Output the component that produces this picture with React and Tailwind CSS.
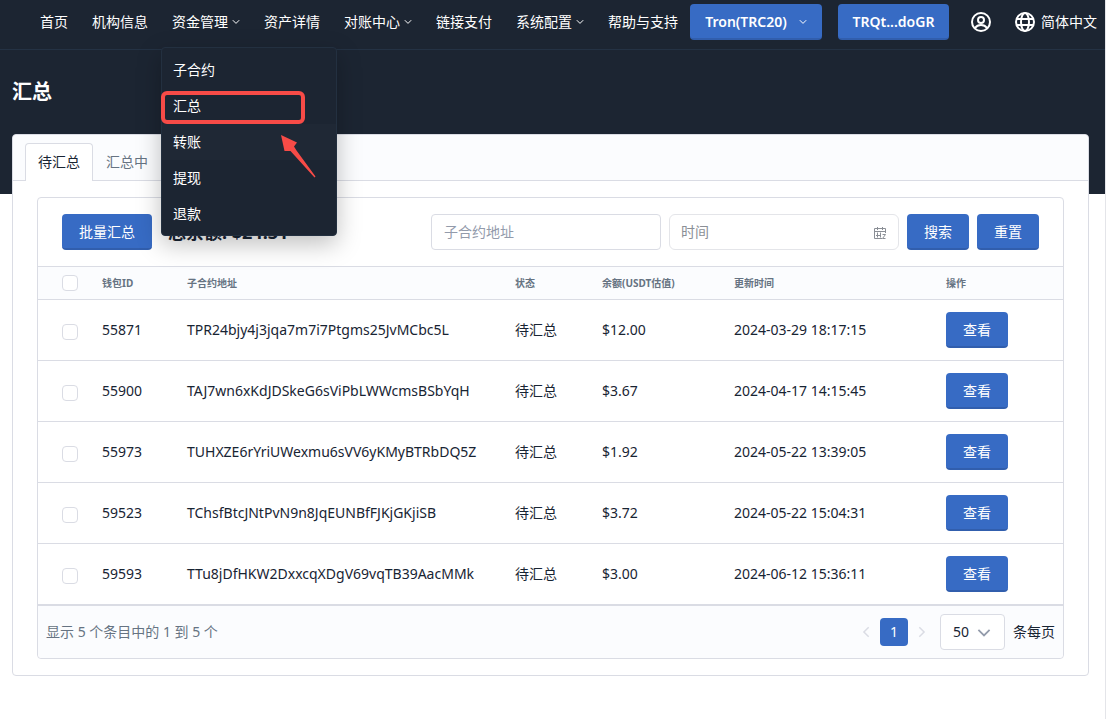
import { useState } from "react";

const navItems = [
  { label: "首页" },
  { label: "机构信息" },
  { label: "资金管理", children: ["子合约", "汇总", "转账", "提现", "退款"] },
  { label: "资产详情" },
  { label: "对账中心", arrow: true },
  { label: "链接支付" },
  { label: "系统配置", arrow: true },
  { label: "帮助与支持" }
];

const wallets = [
  { id: "55871", address: "TPR24bjy4j3jqa7m7i7Ptgms25JvMCbc5L", balance: "$12.00", time: "2024-03-29 18:17:15" },
  { id: "55900", address: "TAJ7wn6xKdJDSkeG6sViPbLWWcmsBSbYqH", balance: "$3.67", time: "2024-04-17 14:15:45" },
  { id: "55973", address: "TUHXZE6rYriUWexmu6sVV6yKMyBTRbDQ5Z", balance: "$1.92", time: "2024-05-22 13:39:05" },
  { id: "59523", address: "TChsfBtcJNtPvN9n8JqEUNBfFJKjGKjiSB", balance: "$3.72", time: "2024-05-22 15:04:31" },
  { id: "59593", address: "TTu8jDfHKW2DxxcqXDgV69vqTB39AacMMk", balance: "$3.00", time: "2024-06-12 15:36:11" }
];

const Chevron = ({ className }) => (
  <svg className={className} viewBox="0 0 8 8" fill="none" stroke="currentColor">
    <path d="M.8 2.2 4 5.4l3.2-3.2" />
  </svg>
);

const Button = ({ children, className = "" }) => (
  <button
    className={`flex h-9 shrink-0 items-center justify-center rounded border-b-2 border-[#315ead] bg-[#376bc4] pt-0.5 text-white hover:bg-[#315ead] ${className}`}
  >
    {children}
  </button>
);

const Checkbox = ({ label }) => (
  <input
    type="checkbox"
    aria-label={label}
    className="block size-4 appearance-none rounded border border-[#dadce4] bg-white checked:bg-[#376bc4]"
  />
);

const FundsMenu = ({ items }) => (
  <div className="absolute top-full left-px z-20 mt-[7px] w-44 rounded border border-[#233040] bg-[#1c2532] pt-1 pb-[3px] shadow-[0_8px_24px_rgba(0,0,0,0.25)]">
    {items.map((item) => (
      <a
        key={item}
        href="#"
        className={`flex h-9 items-center px-[11px] text-white ${item === "转账" ? "bg-[#1f2835]" : ""}`}
      >
        {item}
      </a>
    ))}
    <div className="pointer-events-none absolute top-[43px] -left-px h-[33px] w-36 rounded-md border-4 border-[#f74b47]" />
    <svg
      className="pointer-events-none absolute top-[86px] left-[118px] h-[46px] w-[38px]"
      viewBox="0 0 38 46"
      fill="#f74b47"
    >
      <path d="M1 1 17 8.500l-3 4 2.500 4L35.500 42.500l-1 1L10.500 17H4.500z" />
    </svg>
  </div>
);

const Header = () => (
  <header className="flex items-start border-b border-[#243244] bg-[#1c2532] pt-1 pr-2 pb-[9px] pl-7 text-white">
    <ul className="flex">
      {navItems.map((item) => (
        <li key={item.label} className="relative">
          <a href="#" className="flex h-9 items-center px-3 whitespace-nowrap">
            {item.label}
            {(item.children || item.arrow) && <Chevron className="ml-1 size-2" />}
          </a>
          {item.children && <FundsMenu items={item.children} />}
        </li>
      ))}
    </ul>
    <Button className="w-[132px] gap-3 font-semibold">
      Tron(TRC20)
      <Chevron className="size-2" />
    </Button>
    <Button className="ml-4 w-[111px] font-semibold">TRQt...doGR</Button>
    <div className="ml-auto flex h-9 items-center gap-6">
      <button aria-label="账户">
        <svg className="size-5" viewBox="0 0 20 20" fill="none" stroke="currentColor" strokeWidth="2">
          <circle cx="10" cy="10" r="9" />
          <circle cx="10" cy="8" r="3" />
          <path d="M4 16c1.500-2.200 3.500-3 6-3s4.500.8 6 3" />
        </svg>
      </button>
      <button className="flex items-center gap-1.5 whitespace-nowrap">
        <svg className="size-5" viewBox="0 0 20 20" fill="none" stroke="currentColor" strokeWidth="2">
          <circle cx="10" cy="10" r="9" />
          <ellipse cx="10" cy="10" rx="4" ry="9" />
          <path d="M1.500 7h17M1.500 13h17" />
        </svg>
        简体中文
      </button>
    </div>
  </header>
);

const Toolbar = () => (
  <div className="flex items-center gap-2 px-6 py-4">
    <Button className="w-[90px]">批量汇总</Button>
    <h2 className="ml-2 text-lg font-bold whitespace-nowrap">总余额: $24.31</h2>
    <input
      type="text"
      aria-label="子合约地址"
      placeholder="子合约地址"
      className="ml-auto h-9 w-[230px] rounded border border-[#dadce4] px-3 pb-0.5 placeholder:text-[#939bab]"
    />
    <div className="relative">
      <input
        type="text"
        aria-label="时间"
        placeholder="时间"
        className="h-9 w-[230px] rounded-md border border-[#e4e5e9] px-[11px] pb-0.5 placeholder:text-[#8b8f96]"
      />
      <svg
        className="absolute top-3 right-3 size-3.5"
        viewBox="0 0 14 14"
        fill="none"
        stroke="#8b8f96"
      >
        <path d="M12.500 7V2.500h-11v10H9M1.500 5.500h11M4.500 1v3M9.500 1v3M3 9.500h5M4.500 6.500v5M7.500 6.500v5M9.500 8.500h3l-3 4h3" />
      </svg>
    </div>
    <Button className="w-[62px]">搜索</Button>
    <Button className="w-[62px]">重置</Button>
  </div>
);

const WalletTable = () => (
  <table className="w-full table-fixed text-left">
    <thead>
      <tr className="h-[33px] border-y border-[#dadce4] bg-[#fbfcfe] text-[10px] text-[#667382]">
        <th className="w-[52px] pl-6">
          <Checkbox label="全选" />
        </th>
        <th className="w-[85px] px-3">钱包ID</th>
        <th className="px-3">子合约地址</th>
        <th className="w-[87px] px-3">状态</th>
        <th className="w-[132px] px-3">余额(USDT估值)</th>
        <th className="w-[212px] px-3">更新时间</th>
        <th className="w-[129px] px-3">操作</th>
      </tr>
    </thead>
    <tbody>
      {wallets.map((wallet) => (
        <tr key={wallet.id} className="h-[61px] border-b border-[#dadce4] last:border-b-2">
          <td className="pt-1 pl-6">
            <Checkbox label={wallet.id} />
          </td>
          <td className="px-3">{wallet.id}</td>
          <td className="px-3">{wallet.address}</td>
          <td className="px-3">待汇总</td>
          <td className="px-3">{wallet.balance}</td>
          <td className="px-3">{wallet.time}</td>
          <td className="px-3">
            <Button className="w-[62px]">查看</Button>
          </td>
        </tr>
      ))}
    </tbody>
  </table>
);

const Pagination = () => {
  const [size, setSize] = useState("50");

  return (
    <div className="flex items-center rounded-b bg-[#fbfcfe] p-2">
      <p className="text-[#667382]">显示 5 个条目中的 1 到 5 个</p>
      <div className="ml-auto flex items-center">
        <button disabled aria-label="上一页" className="text-[#dadce4]">
          <Chevron className="size-3 rotate-90" />
        </button>
        <button className="mx-2 size-7 rounded bg-[#376bc4] text-white">1</button>
        <button disabled aria-label="下一页" className="text-[#dadce4]">
          <Chevron className="size-3 -rotate-90" />
        </button>
      </div>
      <label className="ml-3 flex items-center gap-2">
        <span className="relative">
          <select
            value={size}
            onChange={(e) => setSize(e.target.value)}
            className="h-9 w-[65px] appearance-none rounded border border-[#dadce4] bg-white px-3"
          >
            <option>20</option>
            <option>50</option>
          </select>
          <Chevron className="pointer-events-none absolute top-3 right-3.5 size-3.5 text-[#939bab]" />
        </span>
        条每页
      </label>
    </div>
  );
};

export default function App() {
  return (
    <div className="min-h-screen border-r border-[#e4e5e9] bg-white font-['Noto_Sans','Noto_Sans_CJK_SC',sans-serif] text-sm text-[#182433]">
      <Header />
      <div className="h-36 bg-[#1c2532] px-3 pt-7">
        <h1 className="text-xl font-bold text-white">汇总</h1>
      </div>

      <main className="relative mr-4 -mt-[60px] ml-3 rounded border border-[#dadce4] bg-white">
        <div className="flex h-[46px] items-end rounded-t border-b border-[#dadce4] bg-[#fbfcfe] px-3">
          <button className="-mb-px h-[38px] rounded-t border border-b-0 border-[#dadce4] bg-white px-3 pb-0.5">
            待汇总
          </button>
          <button className="h-[37px] px-[13px] text-[#667382]">汇总中</button>
        </div>
        <div className="px-6 py-4">
          <section className="rounded border border-[#dadce4]">
            <Toolbar />
            <WalletTable />
            <Pagination />
          </section>
        </div>
      </main>
    </div>
  );
}
